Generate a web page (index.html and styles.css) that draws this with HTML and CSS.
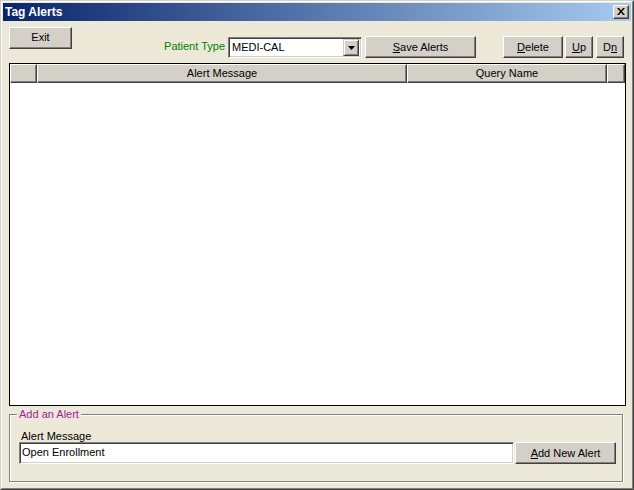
FILE: index.html
```html
<!DOCTYPE html>
<html>
<head>
<meta charset="utf-8">
<link rel="stylesheet" href="styles.css">
</head>
<body>
<div class="window">
  <div class="frame">
    <div class="titlebar">
      <span class="title">Tag Alerts</span>
      <div class="close-btn">
        <svg width="8" height="7" viewBox="0 0 8 7"><path d="M0 0h2l2 2.5L6 0h2L5 3.5 8 7H6L4 4.5 2 7H0l3-3.5z" fill="#000"/></svg>
      </div>
    </div>
    <div class="toolbar">
      <div class="btn btn-exit">Exit</div>
      <label class="pt-label">Patient Type</label>
      <div class="combo">
        <span class="combo-text">MEDI-CAL</span>
        <div class="combo-arrow">
          <svg width="7" height="4" viewBox="0 0 7 4"><path d="M0 0h7L3.5 4z" fill="#000"/></svg>
        </div>
      </div>
      <div class="btn btn-save"><u>S</u>ave Alerts</div>
      <div class="btn btn-delete"><u>D</u>elete</div>
      <div class="btn btn-up"><u>U</u>p</div>
      <div class="btn btn-dn">D<u>n</u></div>
    </div>
    <div class="grid">
      <div class="grid-head">
        <div class="hcell c1"></div>
        <div class="hcell c2">Alert Message</div>
        <div class="hcell c3">Query Name</div>
        <div class="hcell c4"></div>
      </div>
      <div class="grid-body"></div>
    </div>
    <div class="group">
      <span class="legend">Add an Alert</span>
      <div class="field-label">Alert Message</div>
      <div class="add-row">
        <div class="textbox">Open Enrollment</div>
        <div class="btn btn-add"><u>A</u>dd New Alert</div>
      </div>
    </div>
  </div>
</div>
</body>
</html>
```

FILE: styles.css
```css
* { box-sizing: border-box; }
html, body { margin: 0; padding: 0; background: #ece9d8; }
body {
  font-family: "Liberation Sans", Arial, sans-serif;
  font-size: 11px;
  color: #000;
}
.window {
  width: 634px;
  height: 490px;
  border: 1px solid;
  border-color: #d4d0c8 #404040 #404040 #d4d0c8;
  background: #ece9d8;
}
.frame {
  width: 100%;
  height: 100%;
  border: 1px solid;
  border-color: #fff #808080 #808080 #fff;
  padding: 1px;
  display: flex;
  flex-direction: column;
}
.titlebar {
  height: 18px;
  flex: none;
  display: flex;
  align-items: center;
  justify-content: space-between;
  background: linear-gradient(to right, #0a246a 0%, #a6caf0 100%);
  padding: 0 2px 0 2px;
}
.title {
  color: #fff;
  font-weight: bold;
  font-size: 12px;
  line-height: 14px;
}
.close-btn {
  width: 16px;
  height: 14px;
  background: #d4d0c8;
  border: 1px solid;
  border-color: #fff #404040 #404040 #fff;
  box-shadow: inset -1px -1px 0 #808080;
  display: flex;
  align-items: center;
  justify-content: center;
  padding-bottom: 1px;
}
.close-btn svg { display: block; }

.btn {
  background: #d4d0c8;
  border: 1px solid;
  border-color: #fff #404040 #404040 #fff;
  box-shadow: inset -1px -1px 0 #808080;
  display: flex;
  align-items: center;
  justify-content: center;
  height: 22px;
  flex: none;
  padding-bottom: 1px;
  white-space: nowrap;
}
.btn u { text-decoration: underline; text-underline-offset: 1px; }

.toolbar {
  height: 42px;
  flex: none;
  display: flex;
  align-items: flex-start;
  padding-left: 6px;
}
.btn-exit { width: 63px; margin-top: 6px; padding-bottom: 3px; }
.pt-label {
  color: #008000;
  width: 64px;
  margin-left: 89px;
  margin-top: 19px;
  line-height: 13px;
  text-align: right;
  white-space: nowrap;
}
.combo {
  width: 134px;
  height: 21px;
  margin-left: 3px;
  margin-top: 16px;
  background: #fff;
  border: 1px solid;
  border-color: #808080 #fff #fff #808080;
  box-shadow: inset 1px 1px 0 #404040, inset -1px -1px 0 #d4d0c8;
  display: flex;
  align-items: center;
  padding: 1px 2px 1px 3px;
}
.combo-text { flex: 1; line-height: 13px; }
.combo-arrow {
  width: 16px;
  height: 17px;
  background: #d4d0c8;
  border: 1px solid;
  border-color: #d4d0c8 #404040 #404040 #d4d0c8;
  box-shadow: inset 1px 1px 0 #fff, inset -1px -1px 0 #808080;
  display: flex;
  align-items: center;
  justify-content: center;
}
.combo-arrow svg { display: block; }
.btn-save { width: 111px; margin-left: 3px; margin-top: 15px; }
.btn-delete { width: 60px; margin-left: 27px; margin-top: 15px; }
.btn-up { width: 28px; margin-left: 2px; margin-top: 15px; }
.btn-dn { width: 28px; margin-left: 3px; margin-top: 15px; }

.grid {
  margin-left: 6px;
  width: 617px;
  height: 343px;
  flex: none;
  border: 1px solid #000;
  background: #fff;
  display: flex;
  flex-direction: column;
}
.grid-head {
  display: flex;
  height: 19px;
  flex: none;
}
.hcell {
  background: #d4d0c8;
  border-top: 1px solid #fff;
  border-left: 1px solid #fff;
  border-right: 1px solid #404040;
  border-bottom: 1px solid #404040;
  box-shadow: inset -1px -1px 0 #808080;
  display: flex;
  align-items: center;
  justify-content: center;
  line-height: 13px;
  padding-bottom: 1px;
}
.c1 { width: 27px; }
.c2 { width: 370px; }
.c3 { width: 200px; }
.c4 { flex: 1; }
.grid-body { flex: 1; }

.group {
  position: relative;
  margin-top: 8px;
  margin-left: 6px;
  width: 614px;
  height: 68px;
  flex: none;
  border: 1px solid #808080;
  box-shadow: inset 1px 1px 0 #fff, 1px 1px 0 #fff;
  padding: 16px 0 0 10px;
}
.legend {
  position: absolute;
  left: 7px;
  top: -7px;
  padding: 0 2px;
  background: #ece9d8;
  color: #a020a0;
  line-height: 13px;
}
.field-label {
  margin-left: 1px;
  line-height: 11px;
}
.add-row {
  display: flex;
  margin-left: -1px;
}
.textbox {
  width: 495px;
  height: 22px;
  background: #fff;
  border: 1px solid;
  border-color: #808080 #fff #fff #808080;
  box-shadow: inset 1px 1px 0 #404040, inset -1px -1px 0 #d4d0c8;
  padding: 2px 2px 0 2px;
  line-height: 14px;
}
.btn-add { width: 101px; margin-left: 1px; }
```
